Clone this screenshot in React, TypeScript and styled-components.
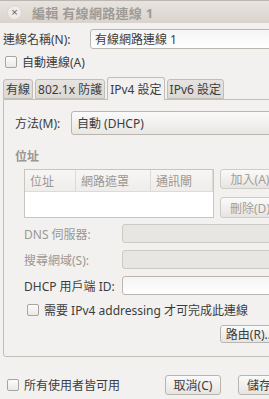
import React from "react";
import styled, { createGlobalStyle } from "styled-components";

const GlobalStyle = createGlobalStyle`
  html, body {
    margin: 0;
    padding: 0;
    overflow: hidden;
    background: #f2f1f0;
  }
  body {
    font-family: "Noto Sans", "Noto Sans CJK TC", sans-serif;
    font-size: 12px;
    color: #3c3c3c;
  }
`;

const Window = styled.div`
  width: 340px;
  height: 399px;
  background: #f2f1f0;
`;

const TitleBar = styled.div`
  height: 23px;
  display: flex;
  align-items: center;
  gap: 10px;
  padding-left: 7px;
  background: linear-gradient(#e7e4df, #dad3cc);
  border-top: 1px solid #bdb6ae;
  box-sizing: border-box;
`;

const CloseButton = styled.div`
  width: 13px;
  height: 13px;
  border-radius: 50%;
  background: #efece8;
  border: 1px solid #d9d4ce;
  color: #5a5652;
  font-size: 9px;
  line-height: 12px;
  text-align: center;
  font-family: "DejaVu Sans", sans-serif;
`;

const Title = styled.div`
  font-weight: bold;
  font-size: 13px;
  color: #a19b95;
  letter-spacing: 0.3px;
`;

const Row = styled.div<{ $top?: number; $left?: number }>`
  display: flex;
  align-items: center;
  margin-top: ${(p) => p.$top ?? 0}px;
  padding-left: ${(p) => p.$left ?? 0}px;
`;

const Label = styled.div<{ $width?: number; $dim?: boolean }>`
  width: ${(p) => (p.$width ? `${p.$width}px` : "auto")};
  flex-shrink: 0;
  color: ${(p) => (p.$dim ? "#9b9791" : "#3c3c3c")};
  white-space: nowrap;
`;

const Entry = styled.div<{ $disabled?: boolean; $height?: number }>`
  flex: 1;
  height: ${(p) => p.$height ?? 20}px;
  box-sizing: border-box;
  border: 1px solid ${(p) => (p.$disabled ? "#cdc9c4" : "#bab5af")};
  border-radius: 3px;
  background: ${(p) => (p.$disabled ? "#e8e6e3" : "linear-gradient(#f4f4f4, #ffffff)")};
  padding-left: 4px;
  display: flex;
  align-items: center;
  color: #3c3c3c;
`;

const Combo = styled.div`
  flex: 1;
  height: 24px;
  box-sizing: border-box;
  border: 1px solid #bab5af;
  border-radius: 3px;
  background: linear-gradient(#fafafa, #e9e7e4);
  padding-left: 5px;
  display: flex;
  align-items: center;
`;

const Check = styled.div`
  width: 10px;
  height: 10px;
  border: 1px solid #a9a49e;
  border-radius: 2px;
  background: linear-gradient(#fbfbfb, #ebe9e7);
  margin-right: 5px;
  flex-shrink: 0;
`;

const CheckRow = styled.div<{ $top: number; $left: number }>`
  display: flex;
  align-items: center;
  height: 16px;
  margin-top: ${(p) => p.$top}px;
  padding-left: ${(p) => p.$left}px;
  white-space: nowrap;
`;

const Tabs = styled.div`
  display: flex;
  align-items: flex-end;
  height: 22px;
  margin-top: 7px;
  padding-left: 3px;
  gap: 2px;
`;

const Tab = styled.div<{ $active?: boolean }>`
  height: ${(p) => (p.$active ? 23 : 20)}px;
  box-sizing: border-box;
  padding: 0 2px;
  display: flex;
  align-items: center;
  border: 1px solid #c2bdb7;
  border-bottom: ${(p) => (p.$active ? "none" : "1px solid #c2bdb7")};
  border-radius: 3px 3px 0 0;
  background: ${(p) => (p.$active ? "#f2f1f0" : "linear-gradient(#e6e3e0, #dcd8d4)")};
  margin-bottom: ${(p) => (p.$active ? -1 : 0)}px;
  position: relative;
  white-space: nowrap;
`;

const Page = styled.div`
  margin-left: 3px;
  height: 258px;
  box-sizing: border-box;
  border: 1px solid #c2bdb7;
  border-radius: 0 0 0 3px;
  padding: 11px 0 0 11px;
`;

const SectionTitle = styled.div`
  margin-top: 14px;
  height: 16px;
  line-height: 16px;
  font-weight: bold;
  color: #9b9791;
`;

const AddressArea = styled.div`
  display: flex;
  margin-top: 4px;
  padding-left: 9px;
  gap: 6px;
`;

const Tree = styled.div`
  width: 190px;
  height: 49px;
  box-sizing: border-box;
  border: 1px solid #c8c4bf;
  background: #ffffff;
`;

const TreeHeader = styled.div`
  display: flex;
  height: 21px;
  border-bottom: 1px solid #dedbd7;
  background: linear-gradient(#f7f6f5, #efedeb);
`;

const HeaderCell = styled.div<{ $width: number }>`
  width: ${(p) => p.$width}px;
  box-sizing: border-box;
  padding-left: 5px;
  display: flex;
  align-items: center;
  color: #9b9791;
  border-right: 1px solid #dedbd7;
  white-space: nowrap;
`;

const ButtonColumn = styled.div`
  display: flex;
  flex-direction: column;
  gap: 8px;
`;

const Button = styled.div<{ $width?: number; $height?: number; $dim?: boolean }>`
  width: ${(p) => p.$width ?? 60}px;
  height: ${(p) => p.$height ?? 20}px;
  box-sizing: border-box;
  border: 1px solid ${(p) => (p.$dim ? "#cfcbc6" : "#b9b4ae")};
  border-radius: 3px;
  background: linear-gradient(#fafafa, #e7e5e2);
  display: flex;
  align-items: center;
  justify-content: center;
  color: ${(p) => (p.$dim ? "#a29e98" : "#3c3c3c")};
  white-space: nowrap;
`;

const FieldRow = styled.div<{ $top: number }>`
  display: flex;
  align-items: center;
  margin-top: ${(p) => p.$top}px;
  padding-left: 9px;
`;

const RightRow = styled.div<{ $top: number }>`
  display: flex;
  margin-top: ${(p) => p.$top}px;
  padding-left: 205px;
`;

const Footer = styled.div`
  display: flex;
  align-items: center;
  margin-top: 18px;
  padding-left: 7px;
`;

const FooterButtons = styled.div`
  display: flex;
  gap: 17px;
  margin-left: 45px;
`;

export default function App() {
  return (
    <Window>
      <GlobalStyle />
      <TitleBar>
        <CloseButton>×</CloseButton>
        <Title>編輯 有線網路連線 1</Title>
      </TitleBar>
      <Row $top={6} $left={3}>
        <Label $width={87}>連線名稱(N):</Label>
        <Entry>有線網路連線 1</Entry>
      </Row>
      <CheckRow $top={5} $left={5}>
        <Check />
        自動連線(A)
      </CheckRow>
      <Tabs>
        <Tab>有線</Tab>
        <Tab>802.1x 防護</Tab>
        <Tab $active>IPv4 設定</Tab>
        <Tab>IPv6 設定</Tab>
      </Tabs>
      <Page>
        <Row>
          <Label $width={56}>方法(M):</Label>
          <Combo>自動 (DHCP)</Combo>
        </Row>
        <SectionTitle>位址</SectionTitle>
        <AddressArea>
          <Tree>
            <TreeHeader>
              <HeaderCell $width={51}>位址</HeaderCell>
              <HeaderCell $width={75}>網路遮罩</HeaderCell>
              <HeaderCell $width={62}>通訊閘</HeaderCell>
            </TreeHeader>
          </Tree>
          <ButtonColumn>
            <Button $dim>加入(A)</Button>
            <Button $dim $height={21}>刪除(D)</Button>
          </ButtonColumn>
        </AddressArea>
        <FieldRow $top={6}>
          <Label $width={98} $dim>DNS 伺服器:</Label>
          <Entry $disabled $height={19} />
        </FieldRow>
        <FieldRow $top={7}>
          <Label $width={98} $dim>搜尋網域(S):</Label>
          <Entry $disabled $height={19} />
        </FieldRow>
        <FieldRow $top={7}>
          <Label $width={98}>DHCP 用戶端 ID:</Label>
          <Entry $height={19} />
        </FieldRow>
        <CheckRow $top={7} $left={12}>
          <Check />
          需要 IPv4 addressing 才可完成此連線
        </CheckRow>
        <RightRow $top={7}>
          <Button $height={18}>路由(R)...</Button>
        </RightRow>
      </Page>
      <Footer>
        <Check />
        所有使用者皆可用
        <FooterButtons>
          <Button $width={56}>取消(C)</Button>
          <Button $width={56}>儲存(S)</Button>
        </FooterButtons>
      </Footer>
    </Window>
  );
}
